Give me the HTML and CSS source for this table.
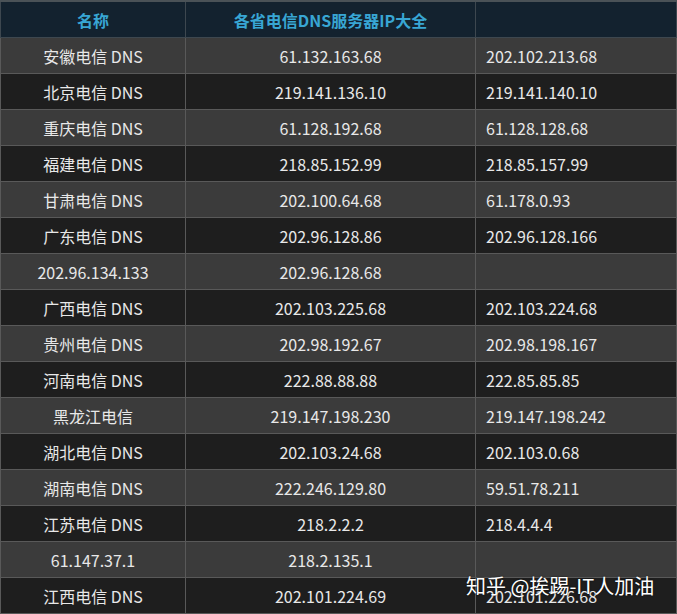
FILE: index.html
```html
<!DOCTYPE html>
<html lang="zh-CN">
<head>
<meta charset="utf-8">
<title>各省电信DNS服务器IP大全</title>
<link rel="stylesheet" href="styles.css">
</head>
<body>
<div class="wrap">
<table class="dns">
  <colgroup><col class="c1"><col class="c2"><col class="c3"></colgroup>
  <thead>
    <tr><th>名称</th><th>各省电信DNS服务器IP大全</th><th></th></tr>
  </thead>
  <tbody>
    <tr><td>安徽电信 DNS</td><td>61.132.163.68</td><td class="l">202.102.213.68</td></tr>
    <tr><td>北京电信 DNS</td><td>219.141.136.10</td><td class="l">219.141.140.10</td></tr>
    <tr><td>重庆电信 DNS</td><td>61.128.192.68</td><td class="l">61.128.128.68</td></tr>
    <tr><td>福建电信 DNS</td><td>218.85.152.99</td><td class="l">218.85.157.99</td></tr>
    <tr><td>甘肃电信 DNS</td><td>202.100.64.68</td><td class="l">61.178.0.93</td></tr>
    <tr><td>广东电信 DNS</td><td>202.96.128.86</td><td class="l">202.96.128.166</td></tr>
    <tr><td>202.96.134.133</td><td>202.96.128.68</td><td class="l"></td></tr>
    <tr><td>广西电信 DNS</td><td>202.103.225.68</td><td class="l">202.103.224.68</td></tr>
    <tr><td>贵州电信 DNS</td><td>202.98.192.67</td><td class="l">202.98.198.167</td></tr>
    <tr><td>河南电信 DNS</td><td>222.88.88.88</td><td class="l">222.85.85.85</td></tr>
    <tr><td>黑龙江电信</td><td>219.147.198.230</td><td class="l">219.147.198.242</td></tr>
    <tr><td>湖北电信 DNS</td><td>202.103.24.68</td><td class="l">202.103.0.68</td></tr>
    <tr><td>湖南电信 DNS</td><td>222.246.129.80</td><td class="l">59.51.78.211</td></tr>
    <tr><td>江苏电信 DNS</td><td>218.2.2.2</td><td class="l">218.4.4.4</td></tr>
    <tr><td>61.147.37.1</td><td>218.2.135.1</td><td class="l"></td></tr>
    <tr><td>江西电信 DNS</td><td>202.101.224.69</td><td class="l">202.101.226.68</td></tr>
  </tbody>
</table>
<div class="watermark">知乎 @挨踢-IT人加油</div>
</div>
</body>
</html>
```
FILE: styles.css
```css
html, body {
  margin: 0;
  padding: 0;
  background: #1e1e1e;
}
.wrap {
  position: relative;
  width: 677px;
  height: 614px;
  overflow: hidden;
  border-top: 2px solid #4a5257;
  box-sizing: border-box;
}
.dns {
  width: 676px;
  border-collapse: collapse;
  table-layout: fixed;
  font-family: "Noto Sans CJK SC", "Noto Sans", sans-serif;
  font-size: 16px;
  color: #e8e8e8;
}
.c1 { width: 185px; }
.c2 { width: 290px; }
.c3 { width: 201px; }
.dns th {
  height: 35px;
  padding: 0;
  background: #13222f;
  color: #38a6d4;
  font-size: 16px;
  font-weight: bold;
  border: 1px solid #3d474f;
  border-top: none;
  text-align: center;
}
.dns td {
  height: 35px;
  padding: 0;
  border: 1px solid #595959;
  text-align: center;
  line-height: 20px;
}
.dns td.l {
  text-align: left;
  padding-left: 10px;
}
.dns tbody tr:nth-child(odd) td { background: #3b3b3b; }
.dns tbody tr:nth-child(even) td { background: #1e1e1e; }
.watermark {
  position: absolute;
  left: 466px;
  top: 569px;
  font-family: "Noto Sans CJK SC", sans-serif;
  font-size: 20px;
  color: #ffffff;
  text-shadow: 0 0 2px rgba(0,0,0,0.7);
  white-space: nowrap;
}
```
